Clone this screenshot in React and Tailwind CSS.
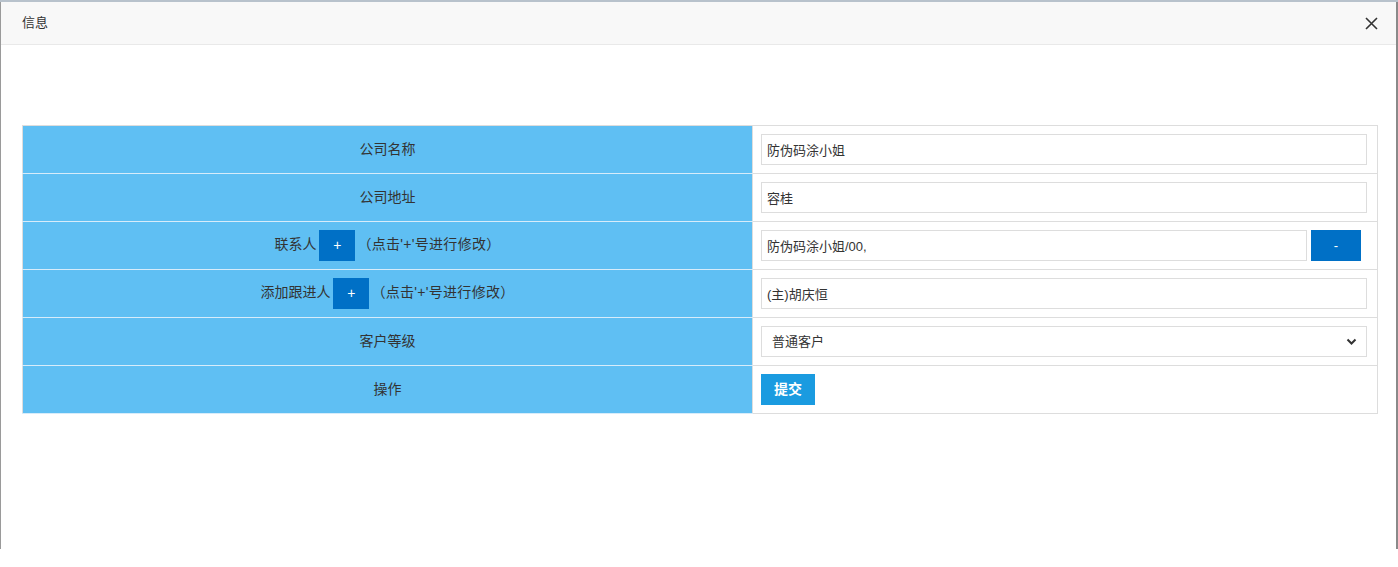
import React from 'react';

const font = { fontFamily: '"Liberation Sans", "Noto Sans CJK SC", sans-serif' };

const Cell = ({ children }) => (
    <td className="w-[730px] h-[48px] bg-[#5fbff3] border-b border-[#d7ecfa] text-center text-[14px] text-[#333] p-0">
        {children}
    </td>
);

const Plus = () => (
    <button className="inline-flex items-center justify-center w-[36px] h-[31px] bg-[#0070c6] text-white text-[14px] align-middle ml-[3px] mr-[2px]">+</button>
);

const App = () => {
    return (
        <div className="w-[1398px] h-[567px] bg-white relative overflow-hidden" style={font}>
            {/* page edges behind the dialog */}
            <div className="absolute left-0 top-0 w-px h-[549px] bg-[#9a9a9a]" />
            <div className="absolute right-0 top-0 w-[2px] h-[549px] bg-[#8a8a8a]" />
            <div className="absolute left-0 top-0 w-full h-[2px] bg-[#b8c2cc]" />

            <div className="relative ml-px mt-[2px] w-[1395px] h-[547px] bg-white flex flex-col">
                <div className="h-[43px] bg-[#f8f8f8] border-b border-[#e9e9e9] flex items-center justify-between pl-[21px] pr-[18px]">
                    <span className="text-[13px] text-[#333]">信息</span>
                    <svg width="13" height="13" viewBox="0 0 13 13" className="text-[#333]">
                        <path d="M1 1L12 12M12 1L1 12" stroke="currentColor" strokeWidth="1.6" />
                    </svg>
                </div>

                <div className="pt-[80px] pl-[21px] pr-[18px]">
                    <table className="w-[1356px] border-collapse border border-[#ddd]">
                        <tbody>
                            <tr>
                                <Cell>公司名称</Cell>
                                <td className="border border-[#ddd] px-[8px]">
                                    <input readOnly value="防伪码涂小姐" className="w-[606px] h-[31px] border border-[#ddd] px-[5px] text-[13px] text-[#333] outline-none" style={font} />
                                </td>
                            </tr>
                            <tr>
                                <Cell>公司地址</Cell>
                                <td className="border border-[#ddd] px-[8px]">
                                    <input readOnly value="容桂" className="w-[606px] h-[31px] border border-[#ddd] px-[5px] text-[13px] text-[#333] outline-none" style={font} />
                                </td>
                            </tr>
                            <tr>
                                <Cell>
                                    联系人<Plus />
                                    <span className="tracking-[0.3px]">（点击'+'号进行修改）</span>
                                </Cell>
                                <td className="border border-[#ddd] px-[8px]">
                                    <div className="flex items-center gap-[4px]">
                                        <input readOnly value="防伪码涂小姐/00," className="w-[546px] h-[31px] border border-[#ddd] px-[5px] text-[13px] text-[#333] outline-none" style={font} />
                                        <button className="w-[50px] h-[31px] bg-[#0070c6] text-white text-[13px]">-</button>
                                    </div>
                                </td>
                            </tr>
                            <tr>
                                <Cell>
                                    添加跟进人<Plus />
                                    <span className="tracking-[0.3px]">（点击'+'号进行修改）</span>
                                </Cell>
                                <td className="border border-[#ddd] px-[8px]">
                                    <input readOnly value="(主)胡庆恒" className="w-[606px] h-[31px] border border-[#ddd] px-[5px] text-[13px] text-[#333] outline-none" style={font} />
                                </td>
                            </tr>
                            <tr>
                                <Cell>客户等级</Cell>
                                <td className="border border-[#ddd] px-[8px]">
                                    <div className="relative w-[606px] h-[31px] border border-[#ddd] flex items-center pl-[10px] text-[13px] text-[#333]">
                                        普通客户
                                        <svg width="11" height="8" viewBox="0 0 11 8" className="absolute right-[9px] top-[11px]">
                                            <path d="M1.5 1.5L5.5 5.5L9.5 1.5" fill="none" stroke="#333" strokeWidth="2" />
                                        </svg>
                                    </div>
                                </td>
                            </tr>
                            <tr>
                                <Cell>操作</Cell>
                                <td className="border border-[#ddd] px-[8px]">
                                    <button className="w-[54px] h-[31px] bg-[#1a9be0] text-white text-[14px] font-bold">提交</button>
                                </td>
                            </tr>
                        </tbody>
                    </table>
                </div>
            </div>
        </div>
    );
};

export default App;
